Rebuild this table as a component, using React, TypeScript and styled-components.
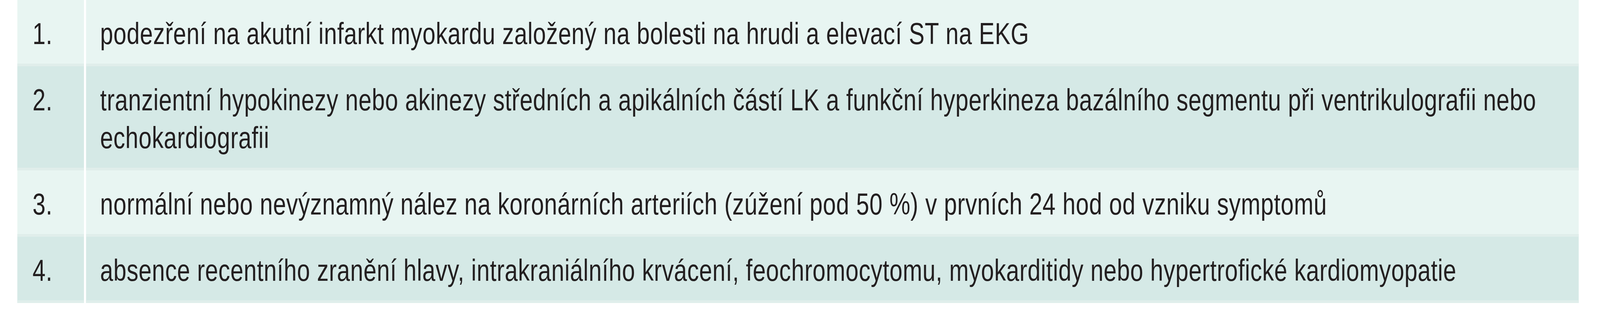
import React from 'react';
import styled, { createGlobalStyle } from 'styled-components';

// the table is laid out on a 5260px wide sheet and squeezed to the window width
const SHEET_WIDTH = 5260;

const GlobalStyle = createGlobalStyle`
  html, body {
    margin: 0;
    padding: 0;
    background: #ffffff;
    overflow: hidden;
  }
`;

const Page = styled.div`
  width: ${SHEET_WIDTH}px;
  height: 800px;
  padding-left: 57px;
  box-sizing: border-box;
  background: #ffffff;
  transform-origin: 0 0;
`;

const Table = styled.div`
  width: 5133px;
  display: flex;
  flex-direction: column;
`;

const Row = styled.div`
  display: grid;
  grid-template-columns: 219px 1fr;
  column-gap: 7px;
`;

type TCellProps = {
  shade: 'light' | 'dark';
};

const Cell = styled.div<TCellProps>`
  background: ${props => (props.shade === 'light' ? '#e8f5f2' : '#d5e9e6')};
  border-bottom: 7px solid #e0eeeb;
  padding: 38px 20px 28px 46px;
  font-family: 'Liberation Sans', Arial, sans-serif;
  font-size: 77px;
  line-height: 97px;
  letter-spacing: 0.8px;
  color: #231f20;
`;

const NumCell = styled(Cell)`
  padding-left: 50px;
  padding-right: 0;
`;

const criteria = [
  'podezření na akutní infarkt myokardu založený na bolesti na hrudi a elevací ST na EKG',
  'tranzientní hypokinezy nebo akinezy středních a apikálních částí LK a funkční hyperkineza bazálního segmentu při ventrikulografii nebo echokardiografii',
  'normální nebo nevýznamný nález na koronárních arteriích (zúžení pod 50 %) v prvních 24 hod od vzniku symptomů',
  'absence recentního zranění hlavy, intrakraniálního krvácení, feochromocytomu, myokarditidy nebo hypertrofické kardiomyopatie',
];

function App() {
  const scale = Math.min(1, window.innerWidth / SHEET_WIDTH);
  return (
    <>
      <GlobalStyle />
      <Page style={{ transform: `scaleX(${scale})` }}>
        <Table>
          {criteria.map((text, i) => {
            const shade = i % 2 === 0 ? 'light' : 'dark';
            return (
              <Row key={i}>
                <NumCell shade={shade}>{i + 1}.</NumCell>
                <Cell shade={shade}>{text}</Cell>
              </Row>
            );
          })}
        </Table>
      </Page>
    </>
  );
}

export default App;
